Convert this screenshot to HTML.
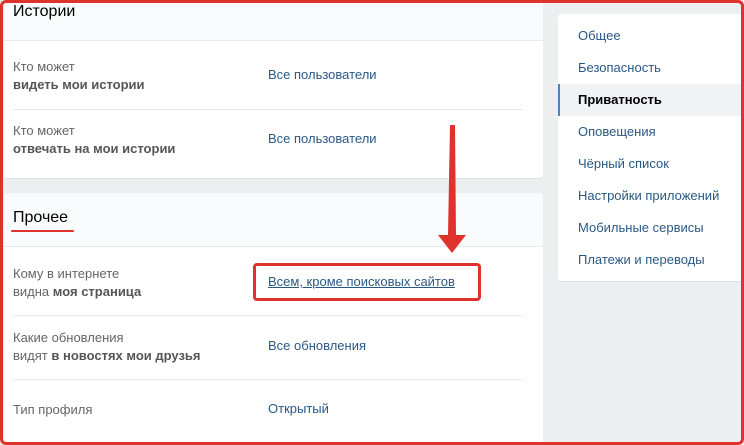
<!DOCTYPE html>
<html><head><meta charset="utf-8"><style>
*{margin:0;padding:0;box-sizing:border-box}
html,body{width:744px;height:445px;overflow:hidden}
body{background:#edeef0;font-family:"Liberation Sans","DejaVu Sans",sans-serif;position:relative}
.a{position:absolute}
.card{position:absolute;background:#fff;border-radius:3px;box-shadow:0 1px 0 #dce1e6;overflow:hidden}
.hd{position:absolute;left:0;right:0;top:0;background:#fafbfc;border-bottom:1px solid #e7e8ec}
.ttl{position:absolute;left:9px;font-size:16px;color:#000}
.lbl{position:absolute;left:9px;font-size:13px;color:#656565;line-height:18px}
.lbl b{color:#555;font-weight:bold}
.val{position:absolute;left:264px;font-size:13px;color:#2a5885}
.sep{position:absolute;left:9px;width:510px;height:1px;background:#e7e8ec}
.m{position:absolute;left:20px;font-size:13px;color:#2a5885}
</style></head><body>
<div class="card" style="left:4px;top:-3px;width:539px;height:181px">
 <div class="hd" style="height:44px"></div>
 <div class="ttl" style="top:6px">Истории</div>
 <div class="lbl" style="top:61px">Кто может<br><b>видеть мои истории</b></div>
 <div class="val" style="top:70px">Все пользователи</div>
 <div class="sep" style="top:112px"></div>
 <div class="lbl" style="top:125px">Кто может<br><b>отвечать на мои истории</b></div>
 <div class="val" style="top:134px">Все пользователи</div>
</div>
<div class="card" style="left:4px;top:193px;width:539px;height:252px">
 <div class="hd" style="height:54px"></div>
 <div class="ttl" style="top:16px">Прочее</div>
 <div class="lbl" style="top:72px">Кому в интернете<br>видна <b>моя страница</b></div>
 <div class="val" style="top:81px;text-decoration:underline">Всем, кроме поисковых сайтов</div>
 <div class="sep" style="top:122px"></div>
 <div class="lbl" style="top:136px">Какие обновления<br>видят <b>в новостях мои друзья</b></div>
 <div class="val" style="top:145px">Все обновления</div>
 <div class="sep" style="top:186px"></div>
 <div class="lbl" style="top:208px">Тип профиля</div>
 <div class="val" style="top:208px">Открытый</div>
</div>
<div class="card" style="left:558px;top:14px;width:186px;height:267px">
 <div class="m" style="top:14px">Общее</div>
 <div class="m" style="top:46px">Безопасность</div>
 <div class="a" style="left:0;top:70px;width:186px;height:32px;background:#f0f2f5;border-left:2px solid #5181b8"></div>
 <div class="m" style="top:78px;color:#000;font-weight:bold">Приватность</div>
 <div class="m" style="top:110px">Оповещения</div>
 <div class="m" style="top:142px">Чёрный список</div>
 <div class="m" style="top:174px">Настройки приложений</div>
 <div class="m" style="top:206px">Мобильные сервисы</div>
 <div class="m" style="top:238px">Платежи и переводы</div>
</div>
<div class="a" style="left:11px;top:230px;width:63px;height:2px;background:#e0322c;border-radius:1px"></div>
<div class="a" style="left:253px;top:263px;width:228px;height:38px;border:3px solid #e0322c;border-radius:4px"></div>
<svg class="a" style="left:0;top:0" width="744" height="445">
<path d="M450,125 L455,125 L456,235 L466,235 L452,253 L438,235 L448,235 Z" fill="#e0322c"/>
</svg>
<div class="a" style="left:0;top:0;width:744px;height:445px;border:3px solid #e0322c;border-radius:6px"></div>
</body></html>
